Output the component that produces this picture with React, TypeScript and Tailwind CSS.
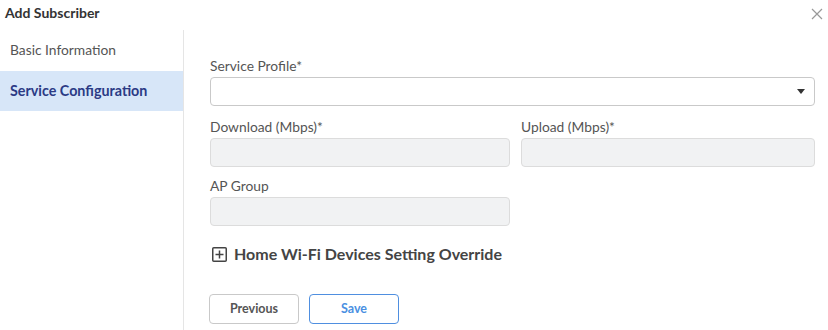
import React from "react";

export default function App() {
  const font = { fontFamily: "Lato, 'Open Sans', sans-serif" };
  return (
    <div className="w-[828px] h-[330px] bg-white overflow-hidden text-[#555]" style={font}>
      <div className="h-[30px] flex items-start justify-between">
        <div className="pl-[5px] pt-[2px] text-[14px] font-bold text-[#333]">Add Subscriber</div>
        <svg className="mt-[8px] mr-[5px]" width="12" height="12" viewBox="0 0 12 12">
          <path d="M1 1 L11 11 M11 1 L1 11" stroke="#999" strokeWidth="1.2" />
        </svg>
      </div>
      <div className="flex h-[300px]">
        <div className="w-[184px] border-r border-[#e5e5e5] flex flex-col">
          <div className="h-[41px] flex items-center pl-[10px] text-[13.8px] text-[#555]">Basic Information</div>
          <div className="h-[40px] flex items-center pl-[10px] text-[14.3px] font-bold text-[#2b3a85] bg-[#d7e6f8]">
            Service Configuration
          </div>
        </div>
        <div className="flex-1 pl-[26px] pr-[13px] pt-[28px]">
          <div className="text-[13.8px] leading-[16px]">Service Profile*</div>
          <div className="mt-[3px] h-[29px] rounded-[4px] border border-[#c9c9c9] flex items-center justify-end pr-[9px]">
            <svg width="8" height="5" viewBox="0 0 8 5">
              <path d="M0 0 L8 0 L4 5 Z" fill="#333" />
            </svg>
          </div>
          <div className="mt-[13px] flex gap-[11px]">
            <div className="w-[300px]">
              <div className="text-[13.8px] leading-[16px]">Download (Mbps)*</div>
              <div className="mt-[3px] h-[29px] rounded-[4px] border border-[#dcdcdc] bg-[#f1f2f3]" />
            </div>
            <div className="flex-1">
              <div className="text-[13.8px] leading-[16px]">Upload (Mbps)*</div>
              <div className="mt-[3px] h-[29px] rounded-[4px] border border-[#dcdcdc] bg-[#f1f2f3]" />
            </div>
          </div>
          <div className="mt-[11px] w-[300px]">
            <div className="text-[13.8px] leading-[16px]">AP Group</div>
            <div className="mt-[3px] h-[29px] rounded-[4px] border border-[#dcdcdc] bg-[#f1f2f3]" />
          </div>
          <div className="mt-[16px] flex items-center gap-[7px] pl-[2px]">
            <svg width="15" height="15" viewBox="0 0 15 15">
              <rect x="0.75" y="0.75" width="13.5" height="13.5" rx="1" fill="none" stroke="#444" strokeWidth="1.5" />
              <path d="M7.5 3.5 V11.5 M3.5 7.5 H11.5" stroke="#444" strokeWidth="1.5" />
            </svg>
            <span className="text-[16px] font-bold text-[#444]">Home Wi-Fi Devices Setting Override</span>
          </div>
          <div className="mt-[28px] flex gap-[10px] -ml-[1px]">
            <button className="w-[90px] h-[30px] rounded-[4px] border border-[#c9c9c9] bg-white text-[12.5px] font-bold text-[#555]">
              Previous
            </button>
            <button className="w-[90px] h-[30px] rounded-[4px] border border-[#4f8fe0] bg-white text-[12.5px] font-bold text-[#4a8fe2]">
              Save
            </button>
          </div>
        </div>
      </div>
    </div>
  );
}
